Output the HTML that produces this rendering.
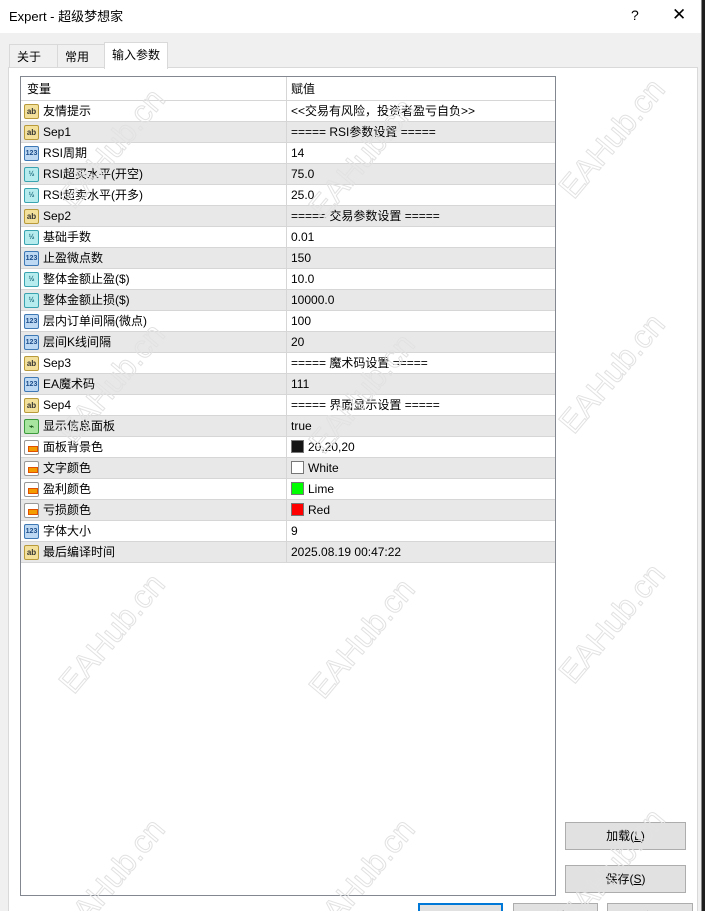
<!DOCTYPE html>
<html><head><meta charset="utf-8"><style>
*{margin:0;padding:0;box-sizing:border-box}
html,body{width:705px;height:911px;overflow:hidden}
body{background:#1e1e1e;font-family:"Liberation Sans","Noto Sans CJK SC",sans-serif;font-size:12px;color:#000;position:relative}
#win{position:absolute;left:0;top:0;width:702px;height:911px;background:#f0f0f0;border-right:1px solid #888;overflow:hidden}
#title{position:absolute;left:0;top:0;width:701px;height:33px;background:#fff;}
#title .t{position:absolute;left:9px;top:8px;font-size:13px;line-height:17px}
#title .q{position:absolute;left:631px;top:7px;font-size:14px}
#title .x{position:absolute;left:672px;top:5px;font-size:17px}
.tab{position:absolute;top:44px;height:24px;border:1px solid #d9d9d9;border-bottom:none;background:#f0f0f0;font-size:12px;line-height:16px;padding:4px 0 0 7px}
#panel{position:absolute;left:8px;top:67px;width:690px;height:860px;background:#fff;border:1px solid #d9d9d9}
#list{position:absolute;left:20px;top:76px;width:536px;height:820px;border:1px solid #828790;background:#fff}
.row{position:absolute;left:0;width:534px;height:21px;border-bottom:1px solid #d6d6d6}
.row.g{background:#e8e8e8}
.c1,.c2{position:absolute;top:3px;line-height:15px;height:15px;white-space:nowrap}
.c1{left:22px}
.c2{left:270px}
.sep{position:absolute;left:265px;top:0;width:1px;height:21px;background:#d6d6d6}
.ic{position:absolute;left:3px;top:3px;width:15px;height:15px;border-radius:2px;font-size:8px;line-height:14px;text-align:center;font-weight:bold}
.ab{background:#f3e19b;border:1px solid #b89a3a;color:#333}
.n{background:#bcd8f2;border:1px solid #3e78b5;color:#1c4c8a;font-size:7px}
.f{background:#b7ecef;border:1px solid #3aa3b0;color:#1a6a7a;font-size:7px}
.b{background:#a8e6a0;border:1px solid #3c9a3c;color:#1a5a1a}
.cl{background:#fff;border:1px solid #999}
.cl:after{content:"";position:absolute;left:3px;top:5px;width:8px;height:4px;background:#f39c00;border:1px solid #e05000}
.sw{display:inline-block;width:13px;height:13px;border:1px solid #777;vertical-align:-2px;margin-right:4px}
.btn{position:absolute;height:28px;border:1px solid #adadad;background:#e1e1e1;text-align:center;line-height:26px;font-size:12px}
.wm{position:absolute;font-size:32px;font-family:"Liberation Sans",sans-serif;color:transparent;-webkit-text-stroke:1px #e2e2e2;transform:rotate(-50deg);white-space:nowrap;pointer-events:none}
</style></head><body>
<div id="win">
<div id="title"><span class="t">Expert - 超级梦想家</span><span class="q">?</span><span class="x">✕</span></div>
<div class="tab" style="left:9px;width:49px">关于</div>
<div class="tab" style="left:57px;width:48px">常用</div>
<div id="panel"></div>
<div class="tab" style="left:104px;top:42px;width:64px;height:27px;background:#fff;border-color:#d9d9d9">输入参数</div>
<div id="list">
<div class="row" style="top:0;height:24px"><span class="c1" style="left:6px;top:5px">变量</span><span class="sep" style="height:24px"></span><span class="c2" style="top:5px">赋值</span></div>
<div class="row" style="top:24px"><span class="ic ab">ab</span><span class="c1">友情提示</span><span class="sep"></span><span class="c2">&lt;&lt;交易有风险，投资者盈亏自负&gt;&gt;</span></div>
<div class="row g" style="top:45px"><span class="ic ab">ab</span><span class="c1">Sep1</span><span class="sep"></span><span class="c2">===== RSI参数设置 =====</span></div>
<div class="row" style="top:66px"><span class="ic n">123</span><span class="c1">RSI周期</span><span class="sep"></span><span class="c2">14</span></div>
<div class="row g" style="top:87px"><span class="ic f">½</span><span class="c1">RSI超买水平(开空)</span><span class="sep"></span><span class="c2">75.0</span></div>
<div class="row" style="top:108px"><span class="ic f">½</span><span class="c1">RSI超卖水平(开多)</span><span class="sep"></span><span class="c2">25.0</span></div>
<div class="row g" style="top:129px"><span class="ic ab">ab</span><span class="c1">Sep2</span><span class="sep"></span><span class="c2">===== 交易参数设置 =====</span></div>
<div class="row" style="top:150px"><span class="ic f">½</span><span class="c1">基础手数</span><span class="sep"></span><span class="c2">0.01</span></div>
<div class="row g" style="top:171px"><span class="ic n">123</span><span class="c1">止盈微点数</span><span class="sep"></span><span class="c2">150</span></div>
<div class="row" style="top:192px"><span class="ic f">½</span><span class="c1">整体金额止盈($)</span><span class="sep"></span><span class="c2">10.0</span></div>
<div class="row g" style="top:213px"><span class="ic f">½</span><span class="c1">整体金额止损($)</span><span class="sep"></span><span class="c2">10000.0</span></div>
<div class="row" style="top:234px"><span class="ic n">123</span><span class="c1">层内订单间隔(微点)</span><span class="sep"></span><span class="c2">100</span></div>
<div class="row g" style="top:255px"><span class="ic n">123</span><span class="c1">层间K线间隔</span><span class="sep"></span><span class="c2">20</span></div>
<div class="row" style="top:276px"><span class="ic ab">ab</span><span class="c1">Sep3</span><span class="sep"></span><span class="c2">===== 魔术码设置 =====</span></div>
<div class="row g" style="top:297px"><span class="ic n">123</span><span class="c1">EA魔术码</span><span class="sep"></span><span class="c2">111</span></div>
<div class="row" style="top:318px"><span class="ic ab">ab</span><span class="c1">Sep4</span><span class="sep"></span><span class="c2">===== 界面显示设置 =====</span></div>
<div class="row g" style="top:339px"><span class="ic b">⌁</span><span class="c1">显示信息面板</span><span class="sep"></span><span class="c2">true</span></div>
<div class="row" style="top:360px"><span class="ic cl"></span><span class="c1">面板背景色</span><span class="sep"></span><span class="c2"><span class="sw" style="background:#141414"></span>20,20,20</span></div>
<div class="row g" style="top:381px"><span class="ic cl"></span><span class="c1">文字颜色</span><span class="sep"></span><span class="c2"><span class="sw" style="background:#fff"></span>White</span></div>
<div class="row" style="top:402px"><span class="ic cl"></span><span class="c1">盈利颜色</span><span class="sep"></span><span class="c2"><span class="sw" style="background:#00ff00"></span>Lime</span></div>
<div class="row g" style="top:423px"><span class="ic cl"></span><span class="c1">亏损颜色</span><span class="sep"></span><span class="c2"><span class="sw" style="background:#ff0000"></span>Red</span></div>
<div class="row" style="top:444px"><span class="ic n">123</span><span class="c1">字体大小</span><span class="sep"></span><span class="c2">9</span></div>
<div class="row g" style="top:465px"><span class="ic ab">ab</span><span class="c1">最后编译时间</span><span class="sep"></span><span class="c2">2025.08.19 00:47:22</span></div>
</div>
<div class="btn" style="left:565px;top:822px;width:121px">加载(<u>L</u>)</div>
<div class="btn" style="left:565px;top:865px;width:121px">保存(<u>S</u>)</div>
<div class="btn" style="left:418px;top:903px;width:85px;border:2px solid #0078d7">确定</div>
<div class="btn" style="left:513px;top:903px;width:85px">取消</div>
<div class="btn" style="left:607px;top:903px;width:86px">重设</div>
<div class="wm" style="left:40px;top:130px">EAHub.cn</div>
<div class="wm" style="left:290px;top:140px">EAHub.cn</div>
<div class="wm" style="left:540px;top:120px">EAHub.cn</div>
<div class="wm" style="left:40px;top:365px">EAHub.cn</div>
<div class="wm" style="left:290px;top:375px">EAHub.cn</div>
<div class="wm" style="left:540px;top:355px">EAHub.cn</div>
<div class="wm" style="left:40px;top:615px">EAHub.cn</div>
<div class="wm" style="left:290px;top:620px">EAHub.cn</div>
<div class="wm" style="left:540px;top:605px">EAHub.cn</div>
<div class="wm" style="left:40px;top:860px">EAHub.cn</div>
<div class="wm" style="left:290px;top:860px">EAHub.cn</div>
<div class="wm" style="left:540px;top:850px">EAHub.cn</div>
</div>
</body></html>
